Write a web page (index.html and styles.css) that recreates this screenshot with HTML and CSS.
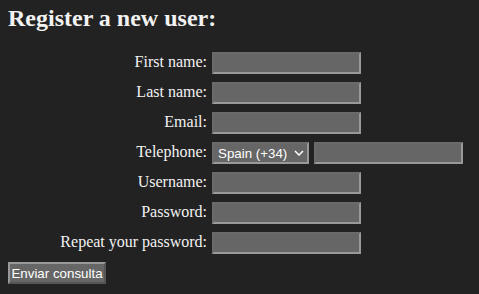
FILE: index.html
```html
<!DOCTYPE html>
<html lang="en">
<head>
<meta charset="utf-8">
<title>Register</title>
<link rel="stylesheet" href="styles.css">
</head>
<body>
<h1 class="title">Register a new user:</h1>
<form class="form" onsubmit="return false">
  <label class="label" for="fn">First name:</label>
  <input class="field" id="fn" type="text">
  <label class="label" for="ln">Last name:</label>
  <input class="field" id="ln" type="text">
  <label class="label" for="em">Email:</label>
  <input class="field" id="em" type="text">
  <label class="label" for="tel">Telephone:</label>
  <div class="phone">
    <span class="select-wrap">
      <select class="select"><option>Spain (+34)</option></select>
      <svg class="chev" width="10" height="6" viewBox="0 0 10 6"><path d="M1 1 L5 5 L9 1" fill="none" stroke="#fff" stroke-width="1.5"/></svg>
    </span>
    <input class="field" id="tel" type="text">
  </div>
  <label class="label" for="un">Username:</label>
  <input class="field" id="un" type="text">
  <label class="label" for="pw">Password:</label>
  <input class="field" id="pw" type="password">
  <label class="label" for="pw2">Repeat your password:</label>
  <input class="field" id="pw2" type="password">
  <div class="actions"><button class="submit" type="submit">Enviar consulta</button></div>
</form>
</body>
</html>
```
FILE: styles.css
```css
html, body {
  background: #222222;
}
body {
  margin: 0;
  padding: 5px 8px;
  color: #f2f2f2;
  font-family: "Liberation Serif", "Times New Roman", serif;
  font-size: 16px;
}
.title {
  margin: 0 0 20px;
  font-size: 24px;
  line-height: 27px;
  font-weight: bold;
}
.form {
  display: grid;
  grid-template-columns: 199px auto;
  column-gap: 5px;
  row-gap: 8px;
  align-items: center;
  justify-items: start;
}
.label {
  justify-self: end;
  line-height: 18px;
  padding-bottom: 2px;
}
.field {
  box-sizing: border-box;
  width: 149px;
  height: 22px;
  margin: 0;
  padding: 1px 3px;
  background: #666666;
  color: #fff;
  border-style: solid;
  border-width: 2px;
  border-color: #6a6a6a #999999 #999999 #6a6a6a;
  font-family: "Liberation Sans", Arial, sans-serif;
  font-size: 13.33px;
  outline: none;
}
.phone {
  display: flex;
  align-items: center;
  gap: 5px;
}
.select-wrap {
  position: relative;
  display: block;
  height: 22px;
}
.select {
  -webkit-appearance: none;
  appearance: none;
  box-sizing: border-box;
  width: 97px;
  height: 22px;
  margin: 0;
  padding: 0 0 0 4px;
  background: #666666;
  color: #fff;
  border-style: solid;
  border-width: 2px;
  border-color: #6a6a6a #999999 #999999 #6a6a6a;
  font-family: "Liberation Sans", Arial, sans-serif;
  font-size: 13.33px;
  outline: none;
}
.chev {
  position: absolute;
  left: 82px;
  top: 8px;
  pointer-events: none;
}
.actions {
  grid-column: 1 / -1;
}
.submit {
  box-sizing: border-box;
  width: 98px;
  height: 22px;
  margin: 0;
  padding: 0;
  background: #666666;
  color: #fff;
  border-style: solid;
  border-width: 2px;
  border-color: #999999 #555555 #555555 #999999;
  font-family: "Liberation Sans", Arial, sans-serif;
  font-size: 13.33px;
  text-align: center;
}
```
